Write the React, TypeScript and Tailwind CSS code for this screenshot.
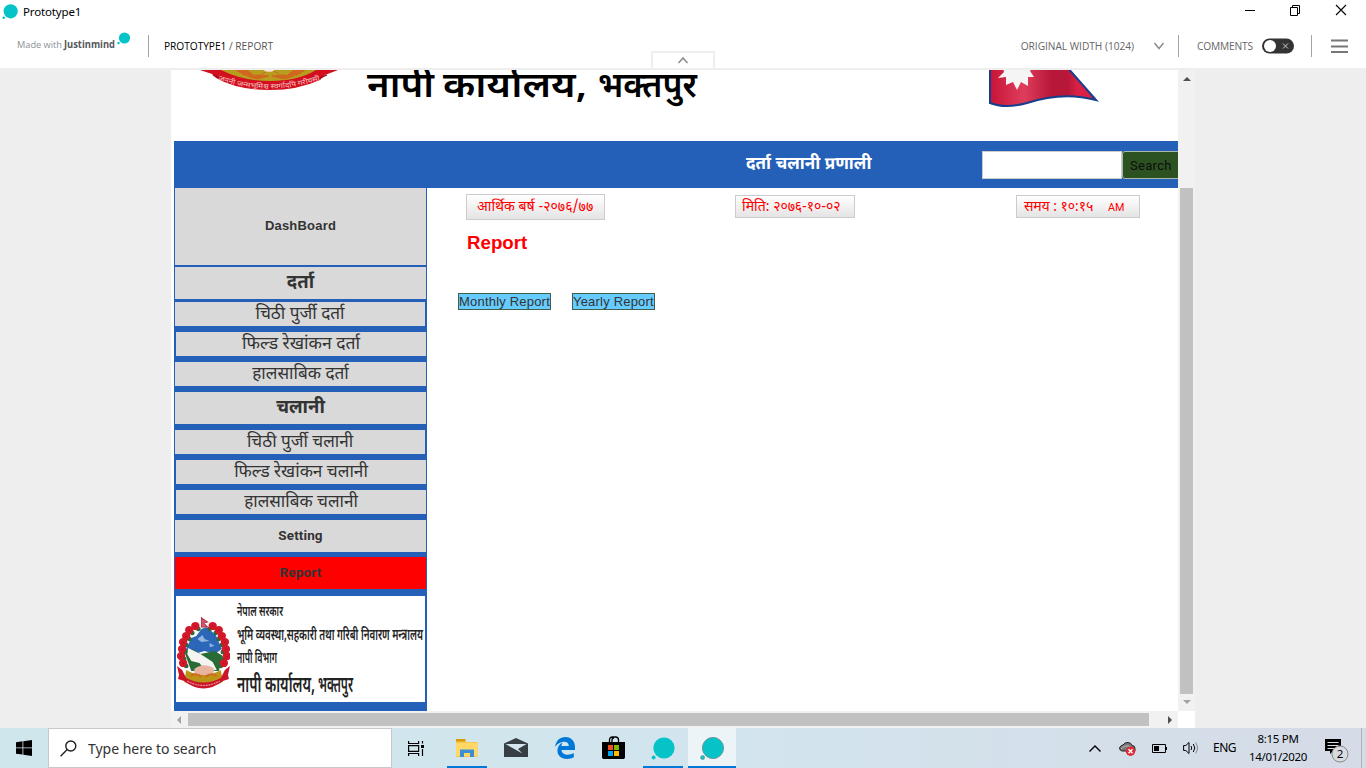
import React from "react";

const deva = "font-['Noto_Sans_Devanagari','Noto_Sans','Liberation_Sans',sans-serif]";

function Bubble({ className, outline }: { className: string; outline?: boolean }) {
  return (
    <svg viewBox="0 0 24 24" className={className}>
      <circle cx="13" cy="11" r="10.6" fill="#05c3c6" stroke={outline ? "#6f9a9c" : "none"} strokeWidth="1" />
      <circle cx="2.6" cy="20.6" r="2" fill="#05c3c6" stroke={outline ? "#6f9a9c" : "none"} strokeWidth="0.8" />
    </svg>
  );
}

function TitleBar() {
  return (
    <div className="flex h-[23px] items-center justify-between pl-[2px] pr-[19px]">
      <div className="flex items-center">
        <Bubble className="h-[16px] w-[16px]" />
        <span className="ml-[5px] font-['Noto_Sans',sans-serif] text-[11.5px] leading-[23px] tracking-[-0.15px] text-black">Prototype1</span>
      </div>
      <div className="flex items-center gap-[34px]">
        <svg viewBox="0 0 12 12" className="h-3 w-3 overflow-visible"><path d="M2 4.500h10" stroke="#000" /></svg>
        <svg viewBox="0 0 12 12" className="mb-[3px] h-3 w-3 overflow-visible" fill="none" stroke="#000"><path d="M1.500 3.500h7v8h-7zM3.500 3V1.500h7v8H9" /></svg>
        <svg viewBox="0 0 12 12" className="mb-[3px] h-3 w-3 overflow-visible"><path d="M1 1l10 10M11 1L1 11" stroke="#000" strokeWidth="1.100" /></svg>
      </div>
    </div>
  );
}

function Nav() {
  return (
    <div className="relative flex h-[45px] items-center font-['Open_Sans','Noto_Sans',sans-serif]">
      <svg viewBox="0 0 120 24" className="ml-[16px] h-6 w-[120px] shrink-0 overflow-visible">
        <text x="1" y="14" fontSize="9.700" fill="#8b9094" textLength="45" lengthAdjust="spacingAndGlyphs">Made with</text>
        <text x="48" y="14" fontSize="9.700" fontWeight="700" fill="#55585b" textLength="51" lengthAdjust="spacingAndGlyphs">Justinmind</text>
        <circle cx="108.500" cy="4" r="5.600" fill="#05c3c6" />
        <circle cx="102.500" cy="9" r="1.200" fill="#05c3c6" />
      </svg>
      <div className="ml-[12px] h-[22px] w-px bg-[#a5a5a5]" />
      <div className="ml-[15px] w-[200px] pt-[3px] text-[10.200px] whitespace-nowrap text-[#555]">
        <span className="font-medium tracking-[-0.05px] text-black">PROTOTYPE1</span> / REPORT
      </div>
      <div className="absolute left-[651px] top-[28px] flex h-[17px] w-[64px] items-center justify-center border-2 border-b-0 border-[#eeeeee] bg-white">
        <svg viewBox="0 0 12 8" className="-mt-[2px] h-2 w-3" fill="none"><path d="M1.500 7L6 2l4.500 5" stroke="#8a8f93" strokeWidth="1.600" /></svg>
      </div>
      <div className="ml-auto flex items-center pr-[18px] text-[10.200px] text-[#666]">
        <span className="pt-[3px] tracking-[-0.04px]">ORIGINAL WIDTH (1024)</span>
        <svg viewBox="0 0 12 8" className="ml-[19px] h-2 w-3" fill="none"><path d="M1.500 1L6 6.500 10.500 1" stroke="#8a8f93" strokeWidth="1.500" /></svg>
        <div className="ml-[13px] h-[22px] w-px bg-[#a5a5a5]" />
        <span className="ml-[18px] w-[56px] pt-[3px] tracking-[-0.15px]">COMMENTS</span>
        <svg viewBox="0 0 32 16" className="ml-[9px] h-4 w-8">
          <rect width="32" height="15" y="0.500" rx="7.500" fill="#333" />
          <circle cx="8" cy="8" r="6" fill="#fff" />
          <path d="M21 5.500l5 5M26 5.500l-5 5" stroke="#ccc" />
        </svg>
        <div className="ml-[17px] h-[22px] w-px bg-[#a5a5a5]" />
        <svg viewBox="0 0 17 14" className="ml-[19px] h-[14px] w-[17px]"><path d="M0 1.500h17M0 7.500h17M0 13h17" stroke="#777" strokeWidth="1.800" /></svg>
      </div>
    </div>
  );
}

function Emblem({ className }: { className: string }) {
  const flowers: [number, number][] = [[18, 10], [12, 14], [9, 20], [6, 26], [5, 33], [4, 40], [6, 47], [35, 10], [41, 14], [44, 20], [47, 26], [48, 33], [49, 40], [46, 47]];
  return (
    <svg viewBox="0 0 52 74" preserveAspectRatio="none" className={className}>
      <ellipse cx="26" cy="38" rx="20" ry="27" fill="#f7f9fa" />
      <path d="M8 35l6-13 5-2 5-7 5-2 9 8 6 14-7 5-10-3-10 3z" fill="#2c66b8" />
      <path d="M20 23l5-4 2 4 5 2-8 1zM32 27l5 3-5 1z" fill="#92b5df" />
      <path d="M7 35l8-2 8 5 14-3 8 5-4 15H14z" fill="#286b35" />
      <path d="M11 32l12 6 12 8 4 8-11 1-6-8-8-2-4-7z" fill="#f4f5f3" />
      <path d="M17 53q9-7 19-1v5l-9 4-10-3z" fill="#e8b4a0" />
      <path d="M24 1v10M24 2l6 4-4 1 4 4h-6z" stroke="#b33850" strokeWidth="1" fill="#db5970" />
      {flowers.map(([x, y]) => (
        <g key={`${x}-${y}`}>
          <circle cx={x + (x < 26 ? 3 : -3)} cy={y + 3} r="2.300" fill="#286b35" />
          <circle cx={x} cy={y} r="4.100" fill="#d3182a" />
          <path d={`M${x - 1} ${y + 1}l1-1 1 1z`} fill="#8f1222" />
        </g>
      ))}
      <path d="M9 54q17 10 34 0l2 12q-19 9-38 0z" fill="#bb9418" />
      <path d="M13 60q6-4 11 1M39 60q-6-4-11 1" stroke="#d06a20" strokeWidth="2" fill="none" />
      <path d="M0 50l5 4 4 8q17 9 34 0l4-8 5-4-2 9 1 4-6 2q-19 15-38 0l-6-2 1-4z" fill="#c9142a" />
      <path d="M10 65q16 9 32 0" stroke="#eb8b92" strokeWidth="1.200" strokeDasharray="2 .7" fill="none" />
    </svg>
  );
}

function Banner() {
  return (
    <div className="flex h-[71px] items-start overflow-hidden">
      <svg viewBox="0 0 148 24" className="ml-[28px] h-6 w-[148px] shrink-0">
        <defs>
          <path id="motto" d="M19 10Q71 27.500 124 9" />
        </defs>
        <path d="M21 0h101q-20 17-51 17T21 0z" fill="#b79d1d" />
        <path d="M37 0l8 5 9 0-6-5zM48 6l10 3 12-3-10-1zM106 0l-8 5-9 0 6-5zM95 6l-10 3-12-3 10-1zM63 4l7-4M80 4l-7-4" fill="#d1661f" stroke="#d1661f" strokeWidth="1" />
        <ellipse cx="70" cy="0" rx="5" ry="1.800" fill="#f7dfd6" />
        <path d="M1 0h21q22 11 49 11 28 0 46-11h22l-13 5-5 5q-22 10-50 10-33 0-54-12l-4-4z" fill="#d2101f" />
        <path d="M14 5l7 3M128 5l-7 3" stroke="#8f0d18" strokeWidth="1.200" />
        <text fontSize="7" fill="#f7c3c4" className={deva} textLength="104" lengthAdjust="spacingAndGlyphs"><textPath href="#motto">जननी जन्मभूमिश्च स्वर्गादपि गरीयसी</textPath></text>
      </svg>
      <svg viewBox="0 0 340 40" className={`${deva} ml-[15px] h-10 w-[340px] shrink-0`} fontSize="35" fontWeight="600">
        <text x="5" y="27" textLength="67" lengthAdjust="spacingAndGlyphs">नापी</text>
        <text x="81" y="27" textLength="144" lengthAdjust="spacingAndGlyphs">कार्यालय,</text>
        <text x="236" y="27" textLength="99" lengthAdjust="spacingAndGlyphs">भक्तपुर</text>
      </svg>
      <svg viewBox="0 0 112 38" className="ml-[286px] h-[38px] w-28 shrink-0">
        <defs>
          <linearGradient id="flag"><stop offset="0" stopColor="#c71437" /><stop offset=".32" stopColor="#df3d5c" /><stop offset=".58" stopColor="#b71738" /><stop offset=".73" stopColor="#b71738" /><stop offset=".83" stopColor="#da2145" /></linearGradient>
        </defs>
        <path d="M2-3v36q15 6 37 0 36-12 69-3L79-3z" fill="url(#flag)" stroke="#143f8c" strokeWidth="2" />
        <path d="M15-2l1 4-6 6 8-1 0 8 7-3 4 8 4-8 7 4 0-9 6 0-4-6 4-5z" fill="#f5f5f5" />
      </svg>
    </div>
  );
}

function SystemBar() {
  return (
    <div className="ml-[3px] flex h-[47px] items-start overflow-hidden bg-[#245fb8]">
      <div className={`${deva} ml-[572px] mt-[11px] w-[236px] shrink-0 whitespace-nowrap text-[17px] leading-[26px] font-bold text-white`}>दर्ता चलानी प्रणाली</div>
      <div className="mt-[10px] h-[28px] w-[140px] shrink-0 border border-[#ccc] bg-white" />
      <div className="mt-[10px] h-[28px] w-[80px] shrink-0 rounded-[3px] border border-[#aab8aa] bg-[#2c5222] pl-[7px] font-['Roboto',sans-serif] text-[13px] leading-[27px] tracking-[0.3px] text-[#0d0d0d]">Search</div>
    </div>
  );
}

const items = [
  { label: "DashBoard", box: "h-[77px] ml-px mr-px", text: "font-['Liberation_Sans',sans-serif] text-[13px] font-bold tracking-[0.2px] pb-[2px]" },
  { label: "दर्ता", box: "mt-[2px] h-[32px] ml-px mr-px", text: "text-[18.500px] font-bold pt-[2px]" },
  { label: "चिठी पुर्जी दर्ता", box: "mt-[3px] h-[24px] ml-px mr-[2px]", text: "text-[17.200px] pt-[3px]" },
  { label: "फिल्ड रेखांकन दर्ता", box: "mt-[6px] h-[24px] ml-[2px] mr-px", text: "text-[17.500px] pt-[2px]" },
  { label: "हालसाबिक दर्ता", box: "mt-[6px] h-[24px] ml-px mr-px", text: "text-[17.200px] pt-[3px]" },
  { label: "चलानी", box: "mt-[6px] h-[32px] ml-px mr-px", text: "text-[18.500px] font-bold pt-[2px]" },
  { label: "चिठी पुर्जी चलानी", box: "mt-[6px] h-[24px] ml-px mr-[2px]", text: "text-[17.100px] pt-[3px]" },
  { label: "फिल्ड रेखांकन चलानी", box: "mt-[6px] h-[24px] ml-[2px] mr-px", text: "text-[17.200px] pt-[3px]" },
  { label: "हालसाबिक चलानी", box: "mt-[6px] h-[24px] ml-[2px] mr-px", text: "text-[17.100px] pt-[3px]" },
  { label: "Setting", box: "mt-[6px] h-[32px] ml-px mr-px", text: "font-['Roboto',sans-serif] text-[13.500px] font-bold tracking-[0.1px]" },
];

function Sidebar() {
  return (
    <div className="ml-[3px] flex h-[523px] w-[253px] shrink-0 flex-col bg-[#245fb8]">
      {items.map((i) => (
        <div key={i.label} className={`flex shrink-0 items-center justify-center bg-[#d9d9d9] ${i.box}`}>
          <span className={`whitespace-nowrap leading-none text-[#333] ${i.text.includes("font-[") ? "" : deva} ${i.text}`}>{i.label}</span>
        </div>
      ))}
      <div className="mx-px mt-[5px] flex h-[32px] shrink-0 items-center justify-center bg-[#ff0000]">
        <span className="font-['Roboto',sans-serif] text-[13.500px] leading-none font-bold tracking-[0.2px] text-[#333]">Report</span>
      </div>
      <div className="ml-[2px] mr-[2px] mt-[7px] flex h-[106px] shrink-0 bg-white">
        <Emblem className="mt-[20px] ml-[1px] h-[74px] w-[53px]" />
        <svg viewBox="0 0 190 106" className={`${deva} h-[106px] w-[190px] overflow-visible`} fill="#222" fontWeight="600">
          <text x="7" y="20" fontSize="15" textLength="46" lengthAdjust="spacingAndGlyphs">नेपाल सरकार</text>
          <text x="7" y="44" fontSize="16.500" textLength="186" lengthAdjust="spacingAndGlyphs">भूमि व्यवस्था,सहकारी तथा गरिबी निवारण मन्त्रालय</text>
          <text x="7" y="67" fontSize="15.500" textLength="40" lengthAdjust="spacingAndGlyphs">नापी विभाग</text>
          <text x="7" y="96" fontSize="22" textLength="78" lengthAdjust="spacingAndGlyphs">नापी कार्यालय,</text>
          <text x="88" y="96" fontSize="22" textLength="35" lengthAdjust="spacingAndGlyphs">भक्तपुर</text>
        </svg>
      </div>
    </div>
  );
}

function Content() {
  const chip = `${deva} shrink-0 whitespace-nowrap border border-[#ccc] bg-linear-to-b from-white to-[#e4e4e4] text-[14.100px] text-[#ff0000]`;
  return (
    <div className="h-[523px] w-[751px] overflow-hidden">
      <div className="flex h-[44px] items-start pt-[6px]">
        <div className={`${chip} ml-[39px] h-[26px] w-[139px] pl-[10px] leading-[26px]`}>आर्थिक बर्ष -२०७६/७७</div>
        <div className={`${chip} mt-px ml-[130px] h-[23px] w-[120px] pl-[6px] leading-[24px] tracking-[-0.1px]`}>मिति: २०७६-१०-०२</div>
        <div className={`${chip} mt-px ml-[161px] flex h-[23px] w-[124px] pl-[7px] leading-[24px]`}>
          <span className="w-[71px] tracking-[-0.18px]">समय : १०:१५</span>
          <span className="ml-[13px] font-['Roboto',sans-serif] text-[10.800px]">AM</span>
        </div>
      </div>
      <div className="ml-[40px] font-['Liberation_Sans',sans-serif] text-[18.700px] leading-[22px] font-bold text-[#ff0000]">Report</div>
      <div className="mt-[39px] ml-[31px] flex gap-[21px] font-['Liberation_Sans',sans-serif] text-[13px] leading-[15px] tracking-[0.2px] text-[#333]">
        <div className="h-[17px] w-[93px] border border-[#3f5f4a] bg-[#66ccff] whitespace-nowrap">Monthly Report</div>
        <div className="h-[17px] w-[83px] border border-[#3f5f4a] bg-[#66ccff] whitespace-nowrap">Yearly Report</div>
      </div>
    </div>
  );
}

function Main() {
  return (
    <div className="flex h-[660px] border-t-2 border-[#eeeeee] bg-[#eeeeee]">
      <div className="ml-[171px] w-[1024px]">
        <div className="flex h-[641px]">
          <div className="w-[1007px] bg-white">
            <Banner />
            <SystemBar />
            <div className="flex"><Sidebar /><Content /></div>
          </div>
          <div className="flex w-[17px] flex-col items-center bg-[#f1f1f1]">
            <svg viewBox="0 0 8 4" className="mt-[7px] h-1 w-2"><path d="M0 4l4-4 4 4z" fill="#505050" /></svg>
            <div className="mt-[107px] h-[506px] w-[13px] bg-[#c1c1c1]" />
            <svg viewBox="0 0 8 4" className="mt-[6px] h-1 w-2"><path d="M0 0l4 4 4-4z" fill="#a3a3a3" /></svg>
          </div>
        </div>
        <div className="flex h-[17px]">
          <div className="flex w-[1007px] items-center bg-[#f1f1f1]">
            <svg viewBox="0 0 4 8" className="ml-[6px] h-2 w-1"><path d="M4 0L0 4l4 4z" fill="#a3a3a3" /></svg>
            <div className="ml-[7px] h-[13px] w-[961px] bg-[#c1c1c1]" />
            <svg viewBox="0 0 4 8" className="ml-[19px] h-2 w-1"><path d="M0 0l4 4-4 4z" fill="#505050" /></svg>
          </div>
          <div className="w-[17px] bg-white" />
        </div>
      </div>
    </div>
  );
}

function Taskbar() {
  return (
    <div className="flex h-[40px] bg-linear-to-r from-[#cfe6ec] via-[#d2e5ee] to-[#d5dbe7] font-['Noto_Sans',sans-serif] text-black">
      <div className="flex w-[48px] items-center justify-center">
        <svg viewBox="0 0 16 16" className="h-4 w-4"><path d="M0 2.200L6.500 1.300v6.200H0zM7.300 1.200L16 0v7.500H7.300zM0 8.300h6.500v6.200L0 13.700zM7.300 8.300H16V16l-8.700-1.200z" /></svg>
      </div>
      <div className="flex h-[40px] w-[344px] items-center border border-[#c4c8ca] bg-white pl-[11px]">
        <svg viewBox="0 0 17 17" className="h-[17px] w-[17px]" fill="none" stroke="#222" strokeWidth="1.400"><circle cx="10.800" cy="6" r="5" /><path d="M7.200 9.600L.6 16.200" /></svg>
        <span className="ml-[11px] pt-px text-[14px] leading-[38px] tracking-[-0.03px] text-[#333]">Type here to search</span>
      </div>
      <div className="flex w-[48px] items-center justify-center">
        <svg viewBox="0 0 16 15" className="h-[15px] w-4" fill="none" stroke="#000" strokeWidth="1.200"><path d="M.6 0v2.500h10V0M.6 15v-2.500h10V15M.6 4.600h10v5.800H.6zM14.500 0v2.500M14.500 8v7" /><path d="M13 4h3v3h-3z" fill="#000" stroke="none" /></svg>
      </div>
      <div className="flex w-[53px] justify-center">
        <div className="flex h-[40px] w-[40px] items-center justify-center border-b-2 border-[#0078d7] pt-[2px]">
          <svg viewBox="0 0 22 18" className="h-[18px] w-[22px]"><path d="M0 1h9l1 2h11.500v15H0z" fill="#f8c64a" /><path d="M0 0h9.500v2.500H0z" fill="#db9a08" /><path d="M0 4h21.500v13H0z" fill="#ffd868" /><path d="M4 10.500h14V18h-4v-4H8v4H4z" fill="#3b8ed4" /></svg>
        </div>
      </div>
      <div className="flex w-[46px] items-center justify-center">
        <svg viewBox="0 0 24 19" className="mb-[2px] h-[19px] w-6"><path d="M0 5.500L12 0l12 5.500V19H0z" fill="#383f44" /><path d="M1.500 6h21L14 11l4.500 4.500z" fill="#d4e6ed" /></svg>
      </div>
      <div className="flex w-[52px] items-center justify-center">
        <svg viewBox="0 0 20 22" className="h-[22px] w-5"><path d="M0 10C1 3.500 5 0 10.300 0 16.500 0 20 4.500 20 10v3H6.500c.3 3.300 3 4.700 6.200 4.700 2.300 0 4.200-.6 6.100-1.700v4.300C16.700 21.500 14.500 22 11.700 22 6 22 2.400 18.600 2.400 13.600c0-3.800 2.100-6.700 5.200-8.100C6.900 6.500 6.600 7.600 6.500 9h7.300c0-2.700-1.500-4.300-4.600-4.300C5.600 4.700 2 7 0 10z" fill="#0078d7" /></svg>
      </div>
      <div className="flex w-[45px] items-center justify-center">
        <svg viewBox="0 0 23 23" className="mb-px h-[23px] w-[23px]"><path d="M0 6h23v15.500l-1 1.500H1l-1-1.500z" /><path d="M7.500 7V4q0-3 3-3h3q3 0 3 3v3M10 7V4q0-2 2-2" fill="none" stroke="#000" strokeWidth="1.300" /><path d="M6 9h5v5H6z" fill="#f25022" /><path d="M12 9h5v5h-5z" fill="#7fba00" /><path d="M6 15h5v5H6z" fill="#00a4ef" /><path d="M12 15h5v5h-5z" fill="#ffb900" /></svg>
      </div>
      <div className="ml-[7px] flex h-[40px] w-[40px] items-center justify-center border-b-2 border-[#0078d7] pt-[3px] pr-px"><Bubble className="h-6 w-6" /></div>
      <div className="ml-[5px] flex h-[40px] w-[48px] items-center justify-center border-b-2 border-[#0078d7] bg-[#ecf4f8] pt-[3px]"><Bubble className="h-6 w-6 overflow-visible" outline /></div>
      <div className="ml-auto flex items-center">
        <svg viewBox="0 0 12 7" className="h-[7px] w-3" fill="none"><path d="M.5 6.500L6 1l5.500 5.500" stroke="#000" strokeWidth="1.400" /></svg>
        <svg viewBox="0 0 17 14" className="ml-[18px] mt-[2px] h-[14px] w-[17px]"><path d="M3 9Q0 8 .6 5.500 2 3 4 3q2-3 5-2.500 3 0 4 3 3 0 3 3V9z" fill="#777" stroke="#222" /><path d="M2 7q5-5 10-2" stroke="#bbb" fill="none" /><circle cx="11.500" cy="9.300" r="4.700" fill="#e02b35" /><path d="M9.500 7.300l4 4M13.500 7.300l-4 4" stroke="#fff" strokeWidth="1.400" /></svg>
        <svg viewBox="0 0 15 9" className="ml-[16px] h-[9px] w-[15px]" fill="none" stroke="#000"><path d="M.5.5h13v8H.5z" /><path d="M2 2h5v5H2z" fill="#000" stroke="none" /><path d="M14.500 3v3" /></svg>
        <svg viewBox="0 0 17 14" className="ml-[16px] h-[14px] w-[17px]" fill="none" stroke="#000"><path d="M.6 4.500h2.200L6 1.500v11L2.800 9.500H.6zM8 5q1.500 2 0 4M10.300 3q3 4 0 8" /><path d="M12.500 1.500q4 5.500 0 11" stroke="#888" /></svg>
        <span className="ml-[13px] w-[24px] text-[12px] tracking-[-0.5px]">ENG</span>
        <div className="mr-px ml-[11px] w-[60px] text-center text-[11.500px] leading-[18px] tracking-[-0.3px] whitespace-nowrap"><div>8:15 PM</div><div>14/01/2020</div></div>
        <svg viewBox="0 0 25 25" className="mt-[5px] ml-[15px] h-[25px] w-[25px]"><path d="M1 1h16v12H9l-3 3v-3H1z" /><path d="M3.500 4.500h11M3.500 7.500h11M3.500 10.500h8" stroke="#d5dbe7" /><circle cx="16" cy="16" r="8" fill="#d8dce0" stroke="#888" /><text x="16" y="20" textAnchor="middle" fontSize="11.500">2</text></svg>
        <div className="ml-[12px] h-[40px] w-px bg-[#aab3bc]" />
        <div className="w-[4px]" />
      </div>
    </div>
  );
}

export default function App() {
  return (
    <div className="h-[768px] w-[1366px] overflow-hidden bg-white">
      <TitleBar />
      <Nav />
      <Main />
      <Taskbar />
    </div>
  );
}
